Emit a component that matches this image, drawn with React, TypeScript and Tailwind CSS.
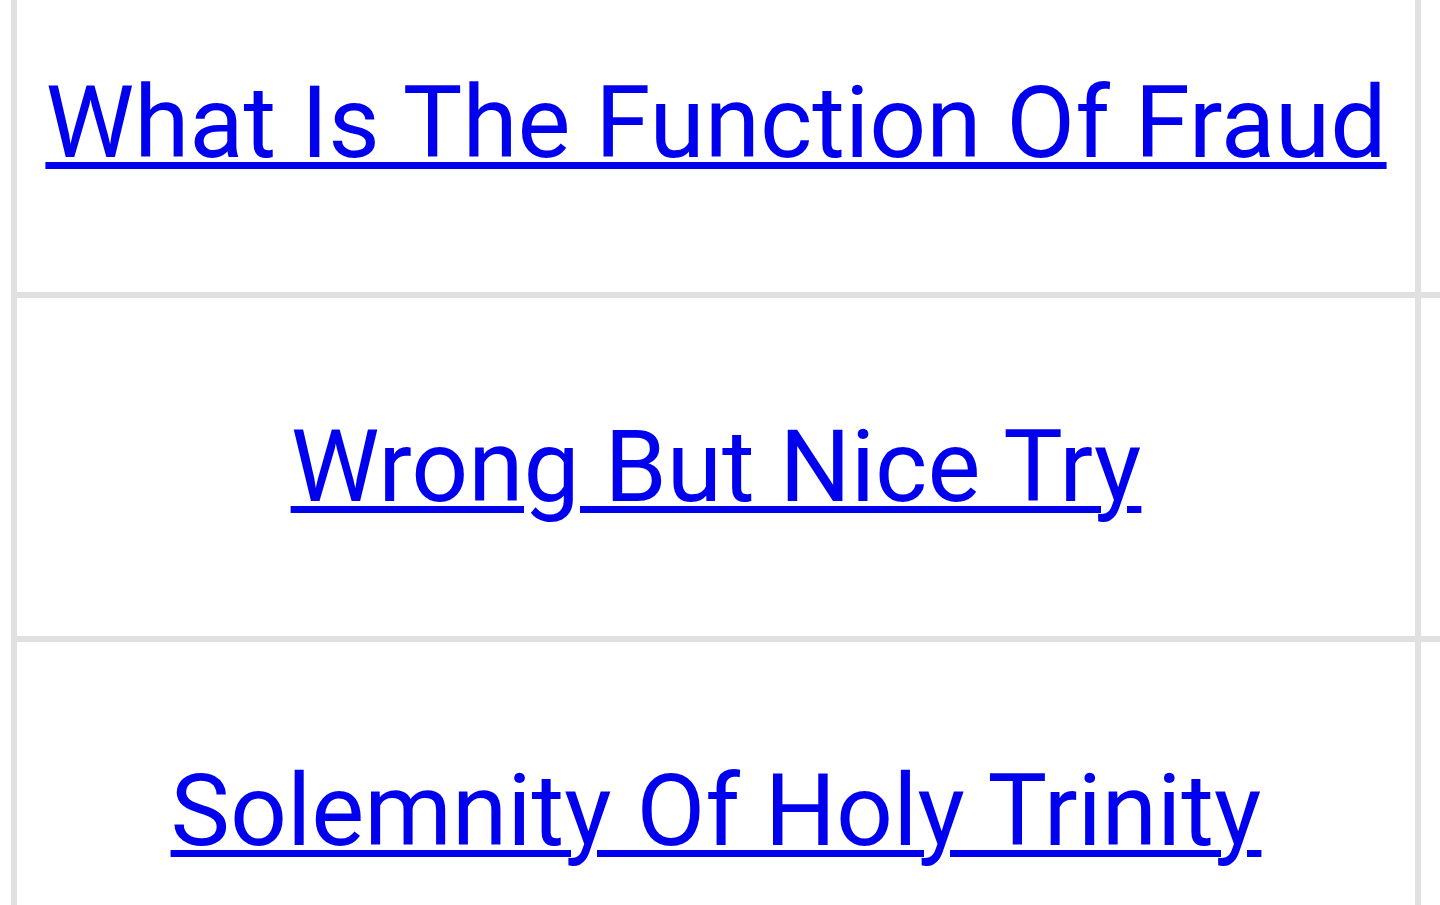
const rows = [
  'What Is The Function Of Fraud',
  'Wrong But Nice Try',
  'Solemnity Of Holy Trinity',
]

export default function App() {
  return (
    <div className="w-[1440px] h-[905px] overflow-hidden bg-white" style={{ fontFamily: 'Roboto, "Liberation Sans", sans-serif' }}>
      <div className="ml-[11px] -mt-[52px] border-l-[6px] border-[#e0e0e0]">
        {rows.map((title) => (
          <div key={title} className="flex border-t-[6px] border-[#e0e0e0]">
            <div className="w-[1404px] h-[338px] shrink-0 flex items-center justify-center border-r-[6px] border-[#e0e0e0]">
              <a
                href="#"
                className="text-[100px] leading-none text-[#0000ee] underline decoration-[7px] underline-offset-[5px] whitespace-nowrap"
              >
                {title}
              </a>
            </div>
            <div className="flex-1" />
          </div>
        ))}
      </div>
    </div>
  )
}
